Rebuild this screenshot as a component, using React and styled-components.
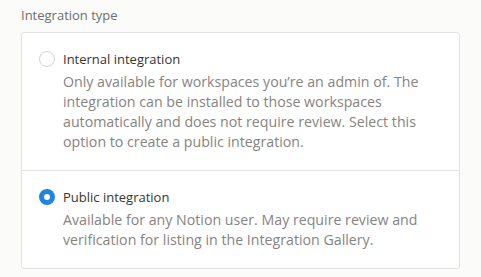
import React, { useState } from "react";
import styled, { createGlobalStyle } from "styled-components";

const GlobalStyle = createGlobalStyle`
  html, body {
    margin: 0;
    background: #fbfbfa;
  }
  body {
    font-family: "Open Sans", "Noto Sans", sans-serif;
  }
`;

const Wrapper = styled.div`
  padding: 5px 22px 0 21px;
  width: 439px;
`;

const Heading = styled.div`
  font-size: 13px;
  line-height: 20px;
  color: #6f6e6a;
  margin-bottom: 7px;
`;

const Card = styled.div`
  background: #fff;
  border: 1px solid #e3e2e0;
  border-radius: 3px;
`;

const Option = styled.label`
  display: flex;
  gap: 8px;
  padding: 16px 18px 18px 17px;
  cursor: pointer;
  & + & {
    border-top: 1px solid #e3e2e0;
  }
`;

const Radio = styled.span`
  flex: none;
  box-sizing: border-box;
  width: 16px;
  height: 16px;
  margin-top: 2px;
  border-radius: 50%;
  border: ${(p) => (p.checked ? "5px solid #2383e2" : "1px solid #d4d3d0")};
  background: #fff;
`;

const Body = styled.div`
  display: flex;
  flex-direction: column;
  gap: 3px;
`;

const Title = styled.div`
  font-size: 13px;
  line-height: 20px;
  color: #37352f;
`;

const Description = styled.div`
  font-size: 14.2px;
  line-height: 20px;
  color: #86847f;
`;

const options = [
  {
    id: "internal",
    title: "Internal integration",
    text: "Only available for workspaces you’re an admin of. The integration can be installed to those workspaces automatically and does not require review. Select this option to create a public integration.",
  },
  {
    id: "public",
    title: "Public integration",
    text: "Available for any Notion user. May require review and verification for listing in the Integration Gallery.",
  },
];

export default function App() {
  const [type, setType] = useState("public");
  return (
    <>
      <GlobalStyle />
      <Wrapper>
        <Heading>Integration type</Heading>
        <Card>
          {options.map((o) => (
            <Option key={o.id} onClick={() => setType(o.id)}>
              <Radio checked={type === o.id} />
              <Body>
                <Title>{o.title}</Title>
                <Description>{o.text}</Description>
              </Body>
            </Option>
          ))}
        </Card>
      </Wrapper>
    </>
  );
}
